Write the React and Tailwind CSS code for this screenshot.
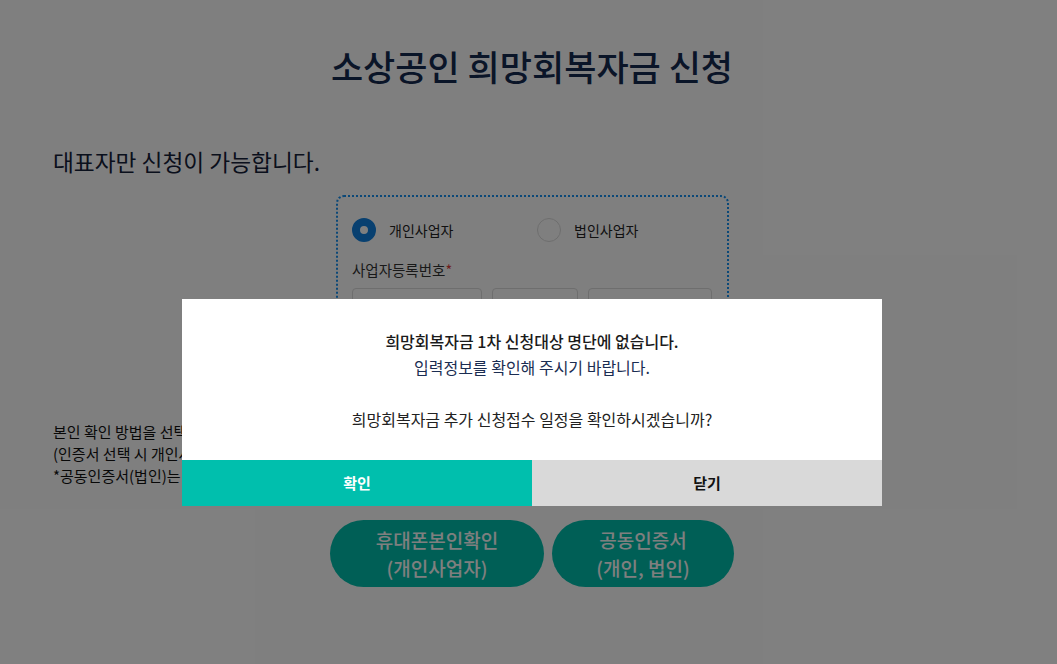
import React from "react";

const font = {
  fontFamily: '"Noto Sans CJK KR", "Noto Sans", sans-serif',
};

const Radio = ({ checked, label }) => (
  <label className="flex items-center gap-[13px]">
    {checked ? (
      <span className="w-6 h-6 rounded-full border-[8px] border-[#1080e0] bg-white" />
    ) : (
      <span className="w-6 h-6 rounded-full border border-[#dcdcdc] bg-white" />
    )}
    <span className="text-[14px] text-[#222]">{label}</span>
  </label>
);

const BusinessCard = () => (
  <div className="ml-[336px] mt-[17px] w-[393px] h-[212px] rounded-lg border-2 border-dotted border-[#1690f0] px-[14px] pt-[21px]">
    <div className="flex items-center h-6">
      <div className="w-[185px]">
        <Radio checked label="개인사업자" />
      </div>
      <Radio label="법인사업자" />
    </div>
    <div className="mt-[18px] text-[14.5px] leading-5 text-[#333]">
      사업자등록번호<span className="text-[#e03c3c]">*</span>
    </div>
    <div className="mt-[8px] flex gap-[10px]">
      <div className="w-[130px] h-9 rounded border border-[#dcdcdc] bg-white" />
      <div className="w-[86px] h-9 rounded border border-[#dcdcdc] bg-white" />
      <div className="w-[124px] h-9 rounded border border-[#dcdcdc] bg-white" />
    </div>
  </div>
);

const Modal = () => (
  <div className="absolute left-[182px] top-[299px] w-[700px] bg-white">
    <div className="pt-[29px] pb-[28px] text-center text-[16px] leading-[26px]">
      <p className="text-[#1a1a1a] font-medium">희망회복자금 1차 신청대상 명단에 없습니다.</p>
      <p className="text-[#1b2d52]">입력정보를 확인해 주시기 바랍니다.</p>
      <p className="h-[26px]" />
      <p className="text-[#222]">희망회복자금 추가 신청접수 일정을 확인하시겠습니까?</p>
    </div>
    <div className="flex h-[46px]">
      <button className="w-1/2 bg-[#00bfad] text-white text-[15px] font-bold">확인</button>
      <button className="w-1/2 bg-[#d9d9d9] text-[#111] text-[15px] font-bold">닫기</button>
    </div>
  </div>
);

export default function App() {
  return (
    <div className="relative w-full h-[664px] bg-white overflow-hidden" style={font}>
      <h1 className="pt-[42px] pl-[7px] text-center text-[35px] leading-[48px] font-medium text-[#142a50]">
        소상공인 희망회복자금 신청
      </h1>
      <p className="mt-[56px] ml-[53px] text-[22.7px] leading-8 text-[#142038]">
        대표자만 신청이 가능합니다.
      </p>
      <BusinessCard />
      <div className="mt-[14px] ml-[53px] w-[129px] overflow-hidden whitespace-nowrap text-[15px] leading-[22px] text-[#111]">
        <p>본인 확인 방법을 선택해 주세요.</p>
        <p>(인증서 선택 시 개인사업자는 개인 공동인증서로 확인합니다.)</p>
        <p>*공동인증서(법인)는 법인사업자만 사용 가능합니다.</p>
      </div>
      <div className="mt-[33px] ml-[330px] flex gap-2">
        <button className="w-[214px] h-[67px] rounded-full bg-[#00bfad] text-white text-[19px] font-medium leading-[28px]">
          휴대폰본인확인
          <br />
          (개인사업자)
        </button>
        <button className="w-[182px] h-[67px] rounded-full bg-[#00bfad] text-white text-[19px] font-medium leading-[28px]">
          공동인증서
          <br />
          (개인, 법인)
        </button>
      </div>
      <div className="absolute inset-0 bg-black/50" />
      <Modal />
    </div>
  );
}
